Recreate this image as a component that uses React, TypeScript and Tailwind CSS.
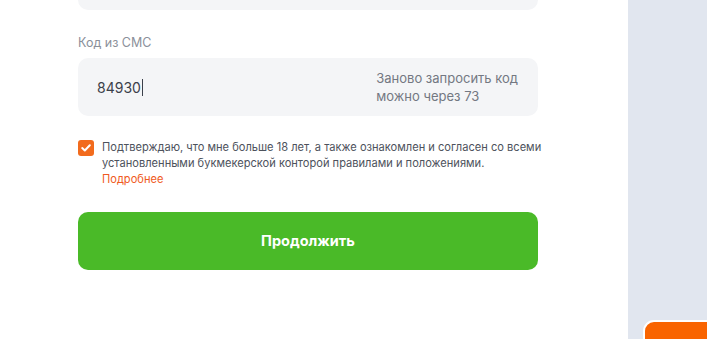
export default function App() {
  return (
    <div className="flex h-[339px] w-[707px] overflow-hidden bg-white font-['Inter',sans-serif]">
      <div className="flex w-[628px] flex-col pl-[78px]">
        <div className="w-[460px]">
          <div className="-mt-[40px] h-[50px] rounded-[10px] bg-[#f4f5f7]" />
          <div className="mt-[25px] text-[12.5px] leading-[16px] text-[#8b909a]">Код из СМС</div>
          <div className="mt-[7px] flex h-[58px] items-center justify-between rounded-[10px] bg-[#f4f5f7] pl-[19px] pr-[20px]">
            <div className="flex items-center text-[14px] text-[#3b404a]">
              84930<span className="ml-[1px] inline-block h-[17px] w-px bg-[#3b404a]" />
            </div>
            <div className="whitespace-nowrap text-[13px] leading-[18px] text-[#737882]">
              Заново запросить код
              <br />
              можно через 73
            </div>
          </div>
          <div className="mt-[24px] flex gap-[8px]">
            <div className="flex h-[16px] w-[16px] shrink-0 items-center justify-center rounded-[3px] bg-[#f26b1d]">
              <svg width="10" height="8" viewBox="0 0 10 8" fill="none">
                <path d="M1.2 4.1 3.8 6.5 8.8 1.3" stroke="white" strokeWidth="2" strokeLinecap="round" strokeLinejoin="round" />
              </svg>
            </div>
            <div className="-mt-[1px] whitespace-nowrap text-[11.1px] leading-[16px] text-[#4d525c]">
              Подтверждаю, что мне больше 18 лет, а также ознакомлен и согласен со всеми
              <br />
              установленными букмекерской конторой правилами и положениями.
              <div className="text-[#f05a22]">Подробнее</div>
            </div>
          </div>
          <button className="mt-[25px] flex h-[58px] w-full items-center justify-center rounded-[10px] bg-[#4aba28] text-[14.5px] font-bold text-white">
            Продолжить
          </button>
        </div>
      </div>
      <div className="relative flex-1 bg-[#e1e6ef]">
        <div className="absolute left-[15px] top-[320px] h-[40px] w-[80px] rounded-tl-[11px] border-2 border-white bg-[#f96400]" />
      </div>
    </div>
  );
}
